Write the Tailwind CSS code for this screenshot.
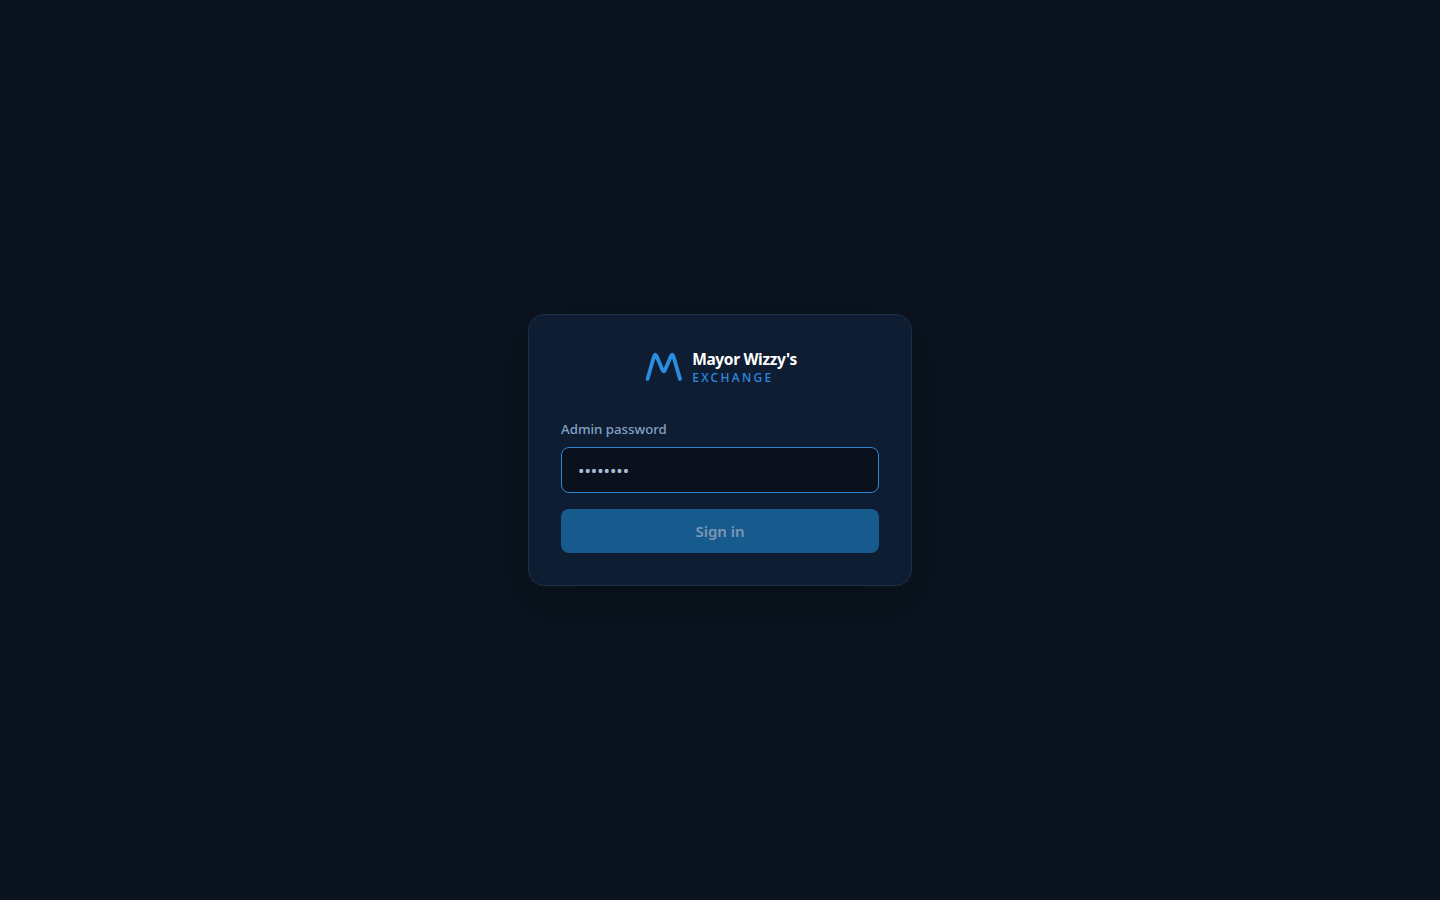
<!DOCTYPE html>
<html lang="en">

<head>
  <meta charset="UTF-8">
  <title>Mayor Wizzy's Exchange | Admin</title>
  <script src="https://cdn.jsdelivr.net/npm/@tailwindcss/browser@4"></script>
</head>

<body class="bg-[#0a131e] font-['Noto_Sans',sans-serif]">
  <div class="min-h-screen flex items-center justify-center">
    <!-- Login card -->
    <div class="w-96 h-[272px] p-8 bg-[#0f1d33] border border-[#1d3049] rounded-2xl shadow-[0_16px_48px_rgba(0,0,0,0.22)]">
      <div class="h-[38px] pl-[2px] flex items-center justify-center gap-[9px]">
        <svg width="38" height="32" viewBox="0 0 38 32" fill="none" class="text-[#2a8ee0]">
          <path d="M2.500 29 L9 6.500 Q10.200 3 11.500 6 L17.500 20 Q18.700 22.500 20 20 L26 6 Q27.300 3 28.500 6.500 L35 29" stroke="currentColor" stroke-width="3.800" stroke-linecap="round" stroke-linejoin="round" />
        </svg>
        <div class="flex flex-col pt-[3px]">
          <span class="text-[15.500px] leading-[19px] font-bold text-white tracking-[-0.35px]">Mayor Wizzy's</span>
          <span class="text-[12px] leading-[16px] mt-[1px] font-medium text-[#2c8ae0] tracking-[2.300px]">EXCHANGE</span>
        </div>
      </div>

      <form class="mt-[35px]">
        <label class="block text-[13.250px] leading-[18px] font-medium text-[#84a2c4] mb-[9px]">Admin password</label>
        <input type="password" value="password" class="block w-full h-[46px] px-4 bg-[#0a111d] border border-[#2f84cf] rounded-lg text-[17px] text-[#a8bdd6] outline-none">
        <button type="button" class="block w-full h-11 mt-4 bg-[#175a8e] rounded-lg text-[15px] font-semibold text-[#7c97b3]">Sign in</button>
      </form>
    </div>
  </div>
</body>

</html>
